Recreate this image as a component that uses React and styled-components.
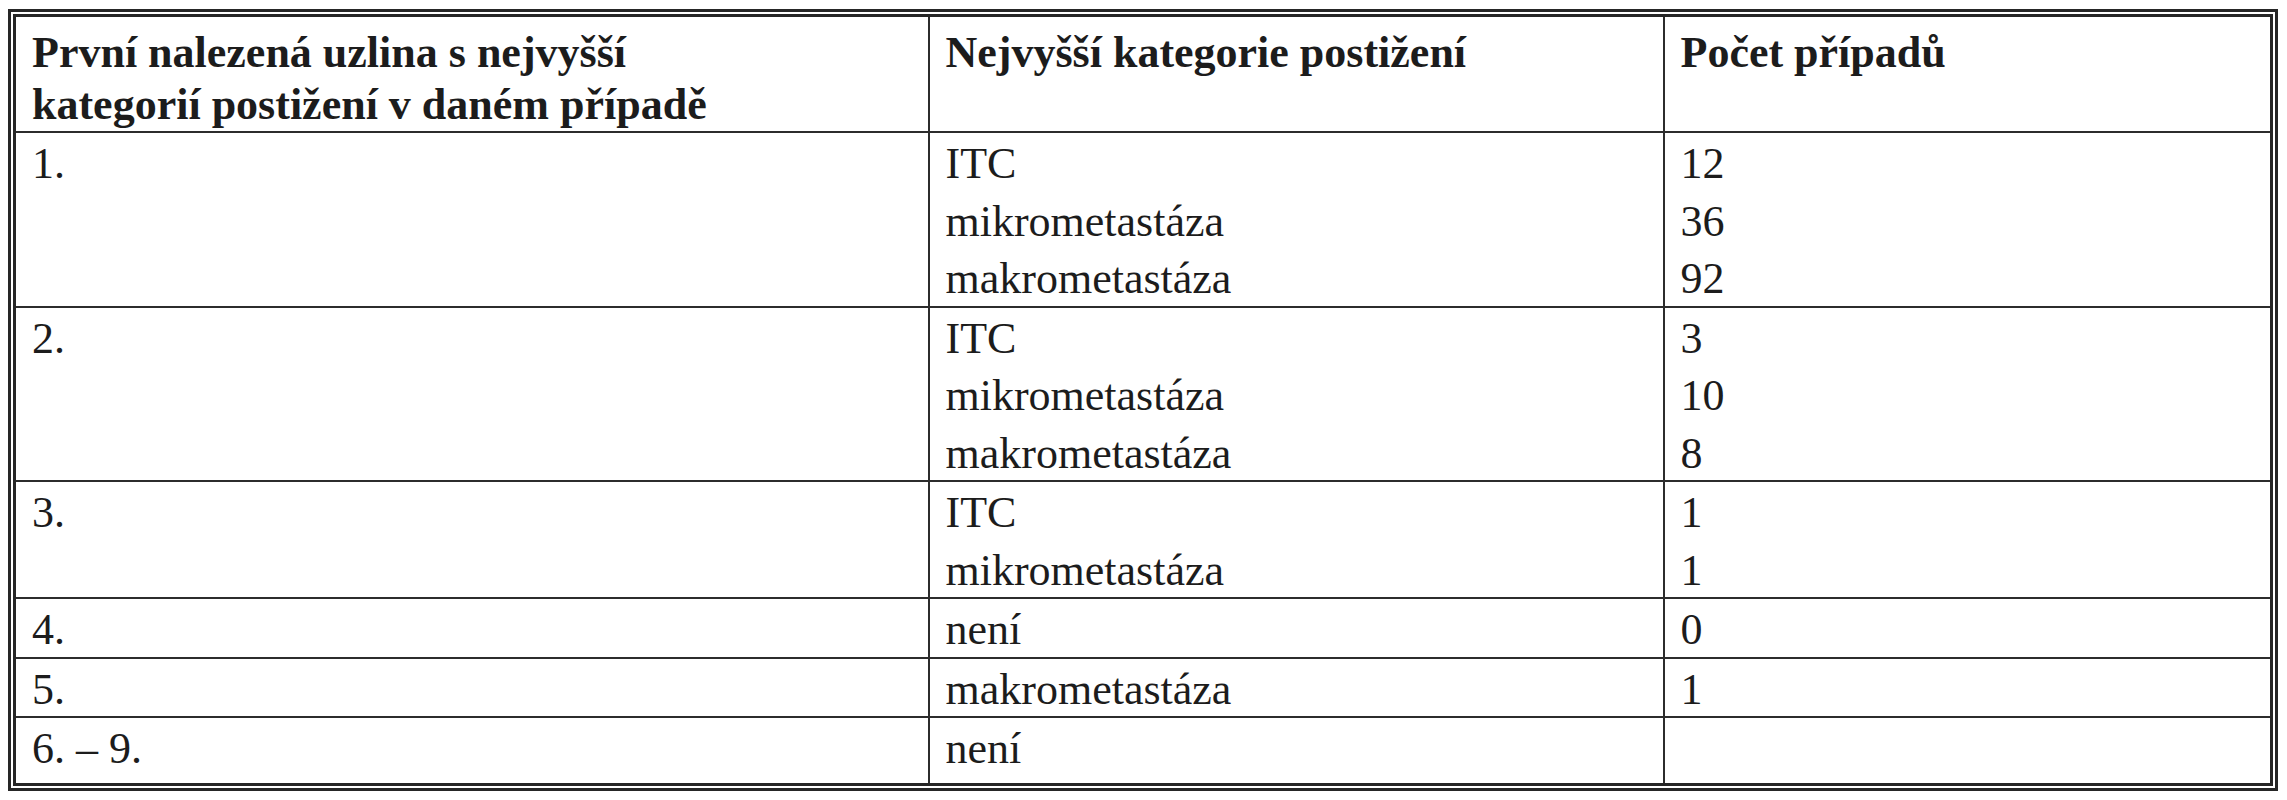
import styled, { createGlobalStyle } from "styled-components";

const GlobalStyle = createGlobalStyle`
  html, body {
    margin: 0;
    padding: 0;
    background: #ffffff;
  }
  body {
    font-family: "Liberation Serif", "Times New Roman", serif;
    color: #1c1c1c;
  }
`

const Page = styled.div`
  padding: 9px 9px 8px 8px;
`

const Frame = styled.div`
  width: 2270px;
  box-sizing: border-box;
  border: 3px solid #262626;
  padding: 2px;
`

const Table = styled.table`
  width: 100%;
  border-collapse: collapse;
  border: 3px solid #262626;
  table-layout: fixed;
  font-family: "Liberation Serif", "Times New Roman", serif;
  color: #1c1c1c;
`

const HeadCell = styled.th`
  text-align: left;
  vertical-align: top;
  font-weight: bold;
  font-size: 44px;
  line-height: 52px;
  padding: 10px 16px 0 16px;
  height: 109px;
  border: 2px solid #2c2c2c;
  box-sizing: border-box;
`

const Cell = styled.td`
  vertical-align: top;
  font-size: 44px;
  padding: 0 16px ${(p) => (p.$last ? "7px" : "0")} 16px;
  border: 2px solid #2c2c2c;
`

const Line = styled.div`
  box-sizing: border-box;
  height: 57.5px;
  padding-top: 4px;
  line-height: 53.5px;
  white-space: nowrap;
`

const groups = [
  { n: "1.", items: [["ITC", "12"], ["mikrometastáza", "36"], ["makrometastáza", "92"]] },
  { n: "2.", items: [["ITC", "3"], ["mikrometastáza", "10"], ["makrometastáza", "8"]] },
  { n: "3.", items: [["ITC", "1"], ["mikrometastáza", "1"]] },
  { n: "4.", items: [["není", "0"]] },
  { n: "5.", items: [["makrometastáza", "1"]] },
  { n: "6. – 9.", items: [["není", ""]] },
]

function App() {
  return (
    <Page>
      <GlobalStyle />
      <Frame>
        <Table>
          <colgroup>
            <col style={{ width: "914px" }} />
            <col style={{ width: "735px" }} />
            <col />
          </colgroup>
          <thead>
            <tr>
              <HeadCell>
                První nalezená uzlina s nejvyšší<br />
                kategorií postižení v daném případě
              </HeadCell>
              <HeadCell>Nejvyšší kategorie postižení</HeadCell>
              <HeadCell>Počet případů</HeadCell>
            </tr>
          </thead>
          <tbody>
            {groups.map((g, i) => {
              const last = i === groups.length - 1
              return (
                <tr key={g.n}>
                  <Cell $last={last}>
                    <Line>{g.n}</Line>
                  </Cell>
                  <Cell $last={last}>
                    {g.items.map(([cat], j) => (
                      <Line key={j}>{cat}</Line>
                    ))}
                  </Cell>
                  <Cell $last={last}>
                    {g.items.map(([, count], j) => (
                      <Line key={j}>{count}</Line>
                    ))}
                  </Cell>
                </tr>
              )
            })}
          </tbody>
        </Table>
      </Frame>
    </Page>
  )
}

export default App
